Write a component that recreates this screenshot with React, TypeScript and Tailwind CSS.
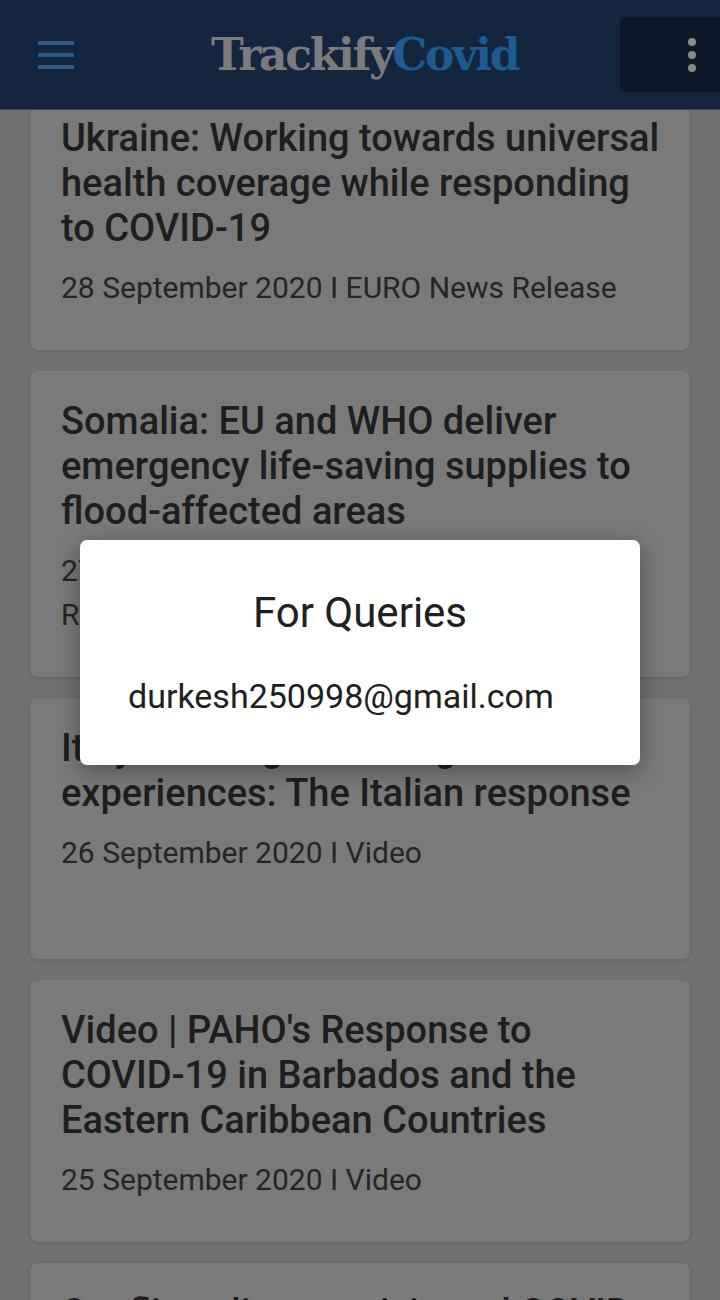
import React from 'react';

const news = [
  {
    title: 'Ukraine: Working towards universal health coverage while responding to COVID-19',
    meta: '28 September 2020 I EURO News Release',
  },
  {
    title: 'Somalia: EU and WHO deliver emergency life-saving supplies to flood-affected areas',
    meta: '27 September 2020 I EMRO Country News Release',
  },
  {
    title: 'Italy: Sharing knowledge and experiences: The Italian response',
    meta: '26 September 2020 I Video',
  },
  {
    title: "Video | PAHO's Response to COVID-19 in Barbados and the Eastern Caribbean Countries",
    meta: '25 September 2020 I Video',
  },
  {
    title: 'Conflict, climate crisis and COVID-19: a triple threat',
    meta: '24 September 2020 I News Release',
  },
];

const App = () => {
  return (
    <div className="relative h-[1300px] w-[720px] overflow-hidden bg-[#717171] font-['Roboto',sans-serif]">
      {/* top bar, sits over the scrolled list */}
      <header className="absolute left-0 top-0 z-10 flex h-[110px] w-full items-center border-b border-[#3c4656] bg-[#14253e]">
        <div className="ml-[38px] flex w-[36px] flex-col gap-[8px]">
          <span className="h-[4px] w-full bg-[#2d5a86]" />
          <span className="h-[4px] w-full bg-[#2d5a86]" />
          <span className="h-[4px] w-full bg-[#2d5a86]" />
        </div>
        <h1 className="ml-[137px] font-['DejaVu_Serif',serif] text-[44px] font-bold tracking-[-2.3px]">
          <span className="text-[#7b7b7b]">Trackify</span>
          <span className="text-[#1d5a8f]">Covid</span>
        </h1>
        <div className="ml-auto flex h-[75px] w-[110px] translate-x-[10px] items-center justify-end rounded-[4px] bg-[#0d1828] pr-[34px]">
          <div className="flex flex-col gap-[5px]">
            <span className="h-[8px] w-[8px] rounded-full bg-[#8a8a8a]" />
            <span className="h-[8px] w-[8px] rounded-full bg-[#8a8a8a]" />
            <span className="h-[8px] w-[8px] rounded-full bg-[#8a8a8a]" />
          </div>
        </div>
      </header>

      <main className="flex flex-col gap-[21px] pl-[30px] pr-[30px] pt-[88px]">
        {news.map((n, i) => (
          <article
            key={i}
            className="min-h-[261px] rounded-[8px] bg-[#7a7a7a] pb-[40px] pl-[31px] pr-[30px] pt-[28px] shadow-[0_1px_4px_rgba(0,0,0,0.12)]"
          >
            <h2 className="text-[38px] font-medium leading-[45px] text-[#1e1e1e]">{n.title}</h2>
            <p className="mt-[15px] text-[30px] leading-[44px] text-[#252525]">{n.meta}</p>
          </article>
        ))}
      </main>

      {/* dialog */}
      <div className="absolute left-[80px] top-[540px] z-20 flex h-[225px] w-[560px] flex-col items-center rounded-[7px] bg-white shadow-[0_6px_24px_rgba(0,0,0,0.35)]">
        <p className="mt-[46px] text-[42px] leading-[54px] text-[#202020]">For Queries</p>
        <p className="mt-[35px] self-start pl-[48px] text-[34px] leading-[42px] text-[#202020]">durkesh250998@gmail.com</p>
      </div>
    </div>
  );
};

export default App;
